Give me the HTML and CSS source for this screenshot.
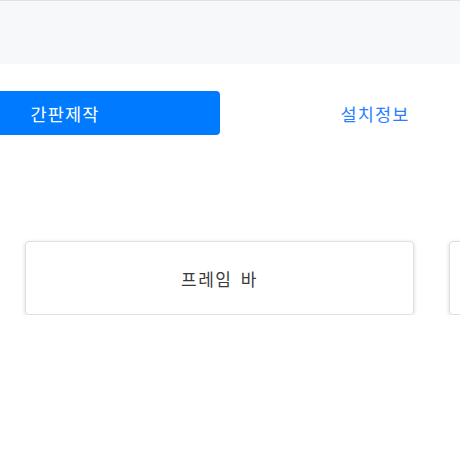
FILE: index.html
```html
<!DOCTYPE html>
<html lang="ko">
<head>
<meta charset="utf-8">
<link rel="stylesheet" href="styles.css">
</head>
<body>
<header class="topbar"></header>
<nav class="tabs">
  <a class="tab active">간판제작</a>
  <a class="tab">설치정보</a>
</nav>
<section class="cards">
  <div class="card">프레임 바</div>
  <div class="card"></div>
</section>
</body>
</html>
```
FILE: styles.css
```css
html, body {
  margin: 0;
  padding: 0;
  background: #fff;
  overflow: hidden;
  font-family: "Noto Sans CJK KR", "Noto Sans", sans-serif;
}
.topbar {
  height: 63px;
  background: #f7f8fa;
  border-top: 1px solid #dfe2e4;
}
.tabs {
  display: flex;
  margin: 27px 0 0 -90px;
}
.tab {
  flex: 0 0 310px;
  height: 44px;
  display: flex;
  align-items: center;
  justify-content: center;
  font-size: 17.5px;
  letter-spacing: 1.2px;
  color: #2b7eff;
  border-radius: 4px;
}
.tab.active {
  background: #007bff;
  color: #fff;
}
.cards {
  display: flex;
  gap: 35px;
  margin: 106px 0 0 25px;
}
.card {
  flex: 0 0 auto;
  width: 387px;
  height: 72px;
  border: 1.5px solid #e0e0e0;
  border-radius: 4px;
  box-shadow: 0 1px 4px rgba(0, 0, 0, 0.15);
  display: flex;
  align-items: center;
  justify-content: center;
  font-size: 17px;
  letter-spacing: 1.5px;
  word-spacing: 2px;
  color: #3a3a3a;
}
```
